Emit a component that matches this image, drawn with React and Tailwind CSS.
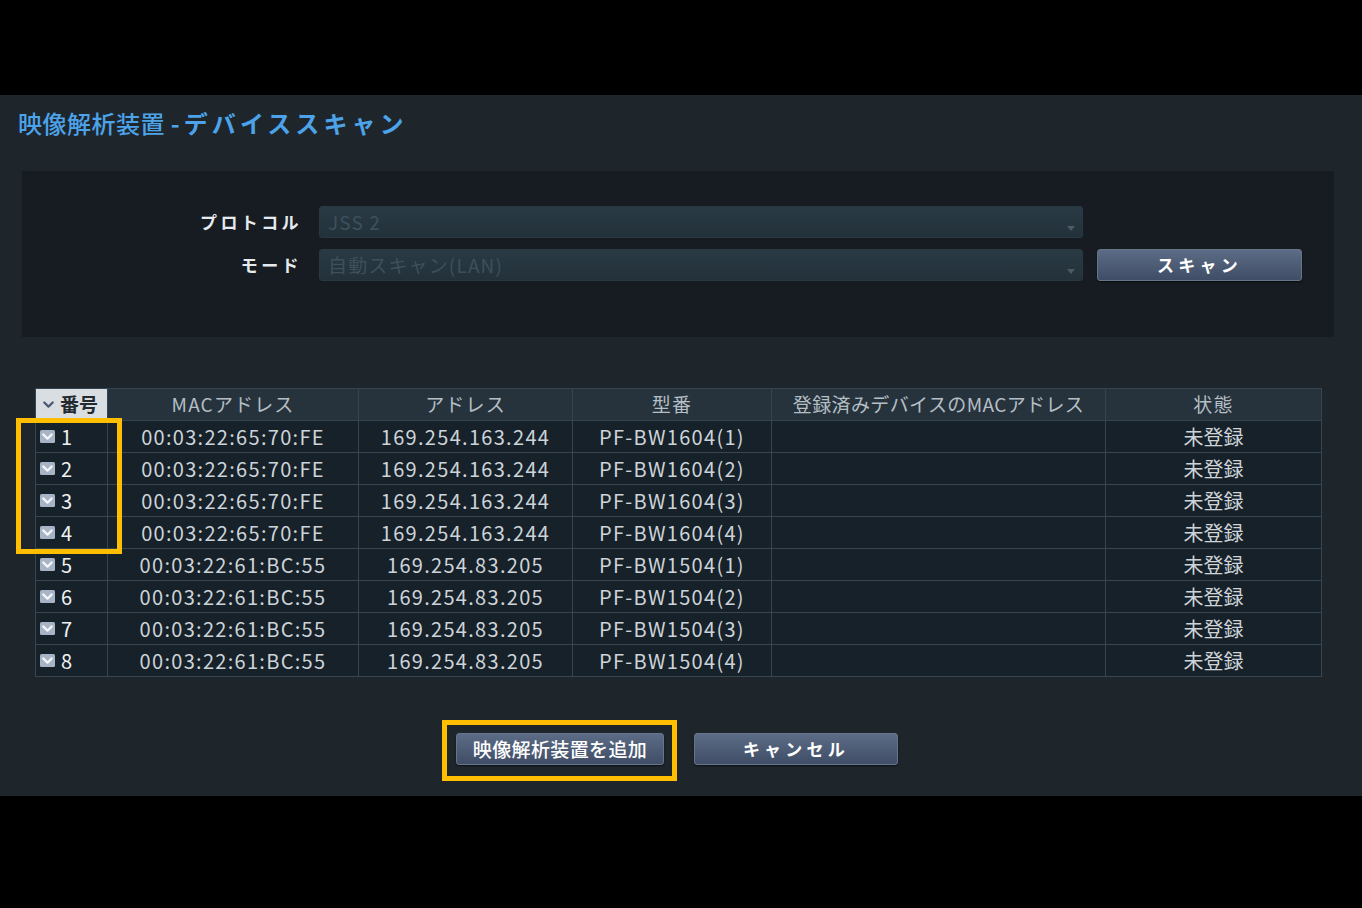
import React from 'react'

const FONT = { fontFamily: '"Noto Sans CJK JP", "Noto Sans", sans-serif' }

const rows = [
  ['1', '00:03:22:65:70:FE', '169.254.163.244', 'PF-BW1604(1)'],
  ['2', '00:03:22:65:70:FE', '169.254.163.244', 'PF-BW1604(2)'],
  ['3', '00:03:22:65:70:FE', '169.254.163.244', 'PF-BW1604(3)'],
  ['4', '00:03:22:65:70:FE', '169.254.163.244', 'PF-BW1604(4)'],
  ['5', '00:03:22:61:BC:55', '169.254.83.205', 'PF-BW1504(1)'],
  ['6', '00:03:22:61:BC:55', '169.254.83.205', 'PF-BW1504(2)'],
  ['7', '00:03:22:61:BC:55', '169.254.83.205', 'PF-BW1504(3)'],
  ['8', '00:03:22:61:BC:55', '169.254.83.205', 'PF-BW1504(4)'],
]

const cols = [72, 251, 214, 199, 334, 216]

const Check = ({ light }) => (
  <svg width="15" height="13" viewBox="0 0 15 13" className="shrink-0">
    <rect x="0" y="0" width="15" height="13" rx="1.5" fill={light ? '#d8dde2' : '#a7b4c6'} />
    <path d="M3.3 4.5 L7.5 8.6 L11.7 4.5" fill="none" stroke={light ? '#4b5b70' : '#f4f7fb'} strokeWidth="2.3" strokeLinecap="round" strokeLinejoin="round" />
  </svg>
)

const Select = ({ value }) => (
  <div className="relative h-[32px] w-[764px] rounded-[3px] border border-[#2a3842] bg-gradient-to-b from-[#2a3a44] to-[#22313a] px-2 flex items-center">
    <span className="text-[19px] tracking-[0.06em] text-[#3d505b]">{value}</span>
    <svg width="8" height="5" viewBox="0 0 8 5" className="absolute right-[7px] top-[19px]">
      <path d="M0 0 H8 L4 5 Z" fill="#4a5b66" />
    </svg>
  </div>
)

const Btn = ({ children, w, spaced }) => (
  <button
    className={
      'h-[32px] rounded-[3px] border border-[#66748c] bg-gradient-to-b from-[#5d6c86] to-[#3f4d66] text-white shadow-[0_1px_2px_rgba(0,0,0,0.6)] ' +
      (spaced ? 'tracking-[0.25em] font-bold text-[17px]' : 'tracking-[0.02em] font-medium text-[19px] text-[#eef1f5]')
    }
    style={{ width: w }}
  >
    {children}
  </button>
)

export default function App() {
  return (
    <div className="relative w-[1362px] h-[908px] bg-black flex flex-col overflow-hidden" style={FONT}>
      <div className="h-[95px] shrink-0" />
      <div className="h-[701px] shrink-0 bg-[#1e262c] flex flex-col">
        <h1 className="pl-[18px] pt-[10px] h-[76px] text-[24px] font-medium text-[#4da3ea] tracking-[0.02em]">
          映像解析装置 <span className="font-bold tracking-[0.17em]">-デバイススキャン</span>
        </h1>

        <div className="ml-[22px] mr-[28px] h-[166px] bg-[#161c21] pt-[35px] flex flex-col gap-[11px]">
          <div className="flex items-center">
            <div className="w-[280px] text-right text-[17px] font-bold text-[#e6eaee] tracking-[0.2em]">プロトコル</div>
            <div className="ml-[17px]"><Select value="JSS 2" /></div>
          </div>
          <div className="flex items-center">
            <div className="w-[280px] text-right text-[17px] font-bold text-[#e6eaee] tracking-[0.2em]">モード</div>
            <div className="ml-[17px]"><Select value="自動スキャン(LAN)" /></div>
            <div className="ml-[14px]"><Btn w={205} spaced>スキャン</Btn></div>
          </div>
        </div>

        <div className="ml-[35px] mt-[51px]">
          <table className="border-collapse table-fixed" style={{ width: 1286 }}>
            <colgroup>
              {cols.map((c, i) => <col key={i} style={{ width: c }} />)}
            </colgroup>
            <thead>
              <tr className="h-[32px] bg-[#26333c] text-[19px] text-[#b4bec5] tracking-[0.06em]">
                <th className="border border-[#344450] bg-[#d9dee2] font-bold text-[#222a30] px-1 tracking-normal">
                  <div className="flex items-center gap-[4px] pl-[1px]">
                    <Check light />
                    <span>番号</span>
                  </div>
                </th>
                <th className="border border-[#344450] font-normal">MACアドレス</th>
                <th className="border border-[#344450] font-normal">アドレス</th>
                <th className="border border-[#344450] font-normal">型番</th>
                <th className="border border-[#344450] font-normal tracking-[0.02em]">登録済みデバイスのMACアドレス</th>
                <th className="border border-[#344450] font-normal">状態</th>
              </tr>
            </thead>
            <tbody>
              {rows.map((r) => (
                <tr key={r[0]} className="h-[32px] bg-[#172129] text-[20px] text-[#cdd4d9] tracking-[1.3px]">
                  <td className="border border-[#36454f] pl-[4px]">
                    <div className="flex items-center gap-[6px]">
                      <Check />
                      <span className="text-[#eef1f3]">{r[0]}</span>
                    </div>
                  </td>
                  <td className="border border-[#36454f] text-center">{r[1]}</td>
                  <td className="border border-[#36454f] text-center">{r[2]}</td>
                  <td className="border border-[#36454f] text-center">{r[3]}</td>
                  <td className="border border-[#36454f]"></td>
                  <td className="border border-[#36454f] text-center tracking-normal">未登録</td>
                </tr>
              ))}
            </tbody>
          </table>
        </div>

        <div className="mt-[56px] flex pl-[456px] gap-[30px]">
          <Btn w={208}>映像解析装置を追加</Btn>
          <Btn w={204} spaced>キャンセル</Btn>
        </div>
      </div>

      <div className="absolute left-[16px] top-[418px] w-[106px] h-[136px] border-[5px] border-[#ffbe00]" />
      <div className="absolute left-[442px] top-[720px] w-[235px] h-[61px] border-[5px] border-[#ffbe00]" />
    </div>
  )
}
